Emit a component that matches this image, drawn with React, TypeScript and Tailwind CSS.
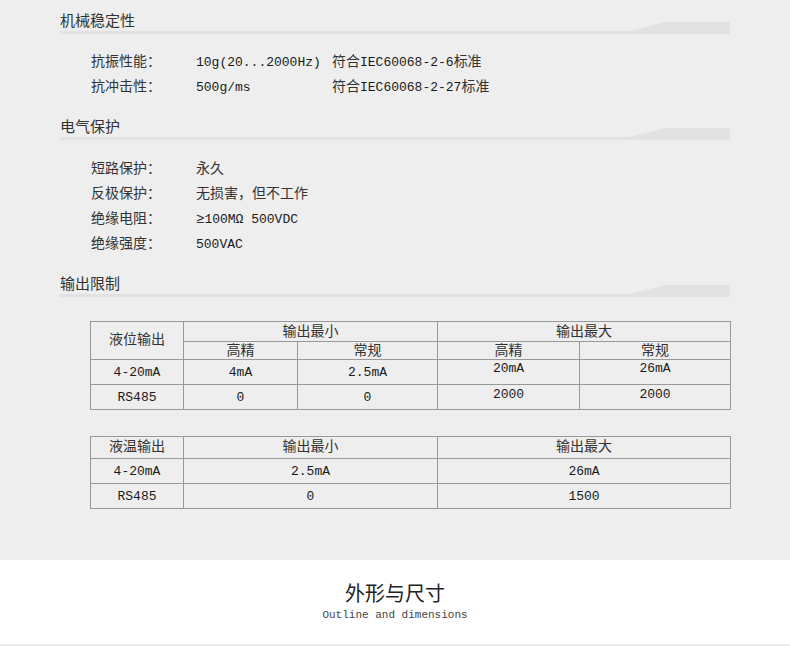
import type { ReactNode } from "react"

// latin runs are set a touch smaller so they sit like the half-width glyphs of the original
function L({ children }: { children: ReactNode }) {
  return <span className="text-[13px] text-[#1a1a1a]">{children}</span>
}

function SectionHeader({ title }: { title: string }) {
  return (
    <div className="flex flex-col">
      <div className="text-[15px] leading-[20px] text-[#333]">{title}</div>
      <div className="mt-[-11px] flex h-[12px] items-end">
        <div className="h-[3px] flex-1 bg-[#e2e2e2]" />
        <svg width="35" height="12" viewBox="0 0 35 12" className="block shrink-0">
          <polygon points="0,9 35,0 35,12 0,12" fill="#e2e2e2" />
        </svg>
        <div className="h-[12px] w-[65px] bg-[#e2e2e2]" />
      </div>
    </div>
  )
}

type Spec = { label: string; value: ReactNode; note?: ReactNode }

function SpecRows({ rows }: { rows: Spec[] }) {
  return (
    <div className="flex flex-col pl-[31px]">
      {rows.map((r) => (
        <div key={r.label} className="grid h-[25px] grid-cols-[105px_136px_1fr] items-center text-[14px] text-[#333]">
          <span>{r.label}</span>
          <span className="whitespace-nowrap">{r.value}</span>
          <span className="whitespace-nowrap">{r.note}</span>
        </div>
      ))}
    </div>
  )
}

const cell = "border border-[#999] text-center p-0"

export default function App() {
  return (
    <div className="w-[790px] bg-[#eeeeee] font-['Liberation_Mono','Noto_Sans_CJK_SC',monospace] text-[#333]">
      <div className="px-[60px] pt-[13px]">
        <SectionHeader title="机械稳定性" />
        <div className="mt-[16px]">
          <SpecRows
            rows={[
              {
                label: "抗振性能：",
                value: <L>10g(20...2000Hz)</L>,
                note: (
                  <>
                    符合<L>IEC60068-2-6</L>标准
                  </>
                ),
              },
              {
                label: "抗冲击性：",
                value: <L>500g/ms</L>,
                note: (
                  <>
                    符合<L>IEC60068-2-27</L>标准
                  </>
                ),
              },
            ]}
          />
        </div>

        <div className="mt-[19px]">
          <SectionHeader title="电气保护" />
        </div>
        <div className="mt-[17px]">
          <SpecRows
            rows={[
              { label: "短路保护：", value: "永久" },
              { label: "反极保护：", value: "无损害，但不工作" },
              {
                label: "绝缘电阻：",
                value: (
                  <>
                    ≥<L>100MΩ 500VDC</L>
                  </>
                ),
              },
              { label: "绝缘强度：", value: <L>500VAC</L> },
            ]}
          />
        </div>

        <div className="mt-[19px]">
          <SectionHeader title="输出限制" />
        </div>

        {/* 液位输出 */}
        <table className="ml-[30px] mt-[24px] w-[640px] table-fixed border-collapse text-[14px] text-[#333]">
          <colgroup>
            <col className="w-[93px]" />
            <col className="w-[114px]" />
            <col className="w-[140px]" />
            <col className="w-[142px]" />
            <col className="w-[151px]" />
          </colgroup>
          <tbody>
            <tr className="h-[20px]">
              <td rowSpan={2} className={cell}>
                液位输出
              </td>
              <td colSpan={2} className={`${cell} leading-[18px]`}>
                输出最小
              </td>
              <td colSpan={2} className={`${cell} leading-[18px]`}>
                输出最大
              </td>
            </tr>
            <tr className="h-[18px]">
              <td className={`${cell} leading-[16px]`}>高精</td>
              <td className={`${cell} leading-[16px]`}>常规</td>
              <td className={`${cell} leading-[16px]`}>高精</td>
              <td className={`${cell} leading-[16px]`}>常规</td>
            </tr>
            <tr className="h-[25px]">
              <td className={cell}>
                <L>4-20mA</L>
              </td>
              <td className={cell}>
                <L>4mA</L>
              </td>
              <td className={cell}>
                <L>2.5mA</L>
              </td>
              <td className={`${cell} align-top leading-[16px]`}>
                <L>20mA</L>
              </td>
              <td className={`${cell} align-top leading-[16px]`}>
                <L>26mA</L>
              </td>
            </tr>
            <tr className="h-[25px]">
              <td className={cell}>
                <L>RS485</L>
              </td>
              <td className={cell}>
                <L>0</L>
              </td>
              <td className={cell}>
                <L>0</L>
              </td>
              <td className={`${cell} align-top leading-[18px]`}>
                <L>2000</L>
              </td>
              <td className={`${cell} align-top leading-[18px]`}>
                <L>2000</L>
              </td>
            </tr>
          </tbody>
        </table>

        {/* 液温输出 */}
        <table className="ml-[30px] mt-[26px] w-[640px] table-fixed border-collapse text-[14px] text-[#333]">
          <colgroup>
            <col className="w-[93px]" />
            <col className="w-[254px]" />
            <col className="w-[293px]" />
          </colgroup>
          <tbody>
            <tr className="h-[22px]">
              <td className={cell}>液温输出</td>
              <td className={cell}>输出最小</td>
              <td className={cell}>输出最大</td>
            </tr>
            <tr className="h-[25px]">
              <td className={cell}>
                <L>4-20mA</L>
              </td>
              <td className={cell}>
                <L>2.5mA</L>
              </td>
              <td className={cell}>
                <L>26mA</L>
              </td>
            </tr>
            <tr className="h-[25px]">
              <td className={cell}>
                <L>RS485</L>
              </td>
              <td className={cell}>
                <L>0</L>
              </td>
              <td className={cell}>
                <L>1500</L>
              </td>
            </tr>
          </tbody>
        </table>
        <div className="h-[51px]" />
      </div>

      <div className="flex flex-col items-center bg-white pb-[22px] pt-[24px]">
        <div className="text-[20px] leading-[24px] text-[#222]">外形与尺寸</div>
        <div className="text-[11px] leading-[14px] text-[#444]">Outline and dimensions</div>
      </div>
      <div className="h-[4px]" />
    </div>
  )
}
